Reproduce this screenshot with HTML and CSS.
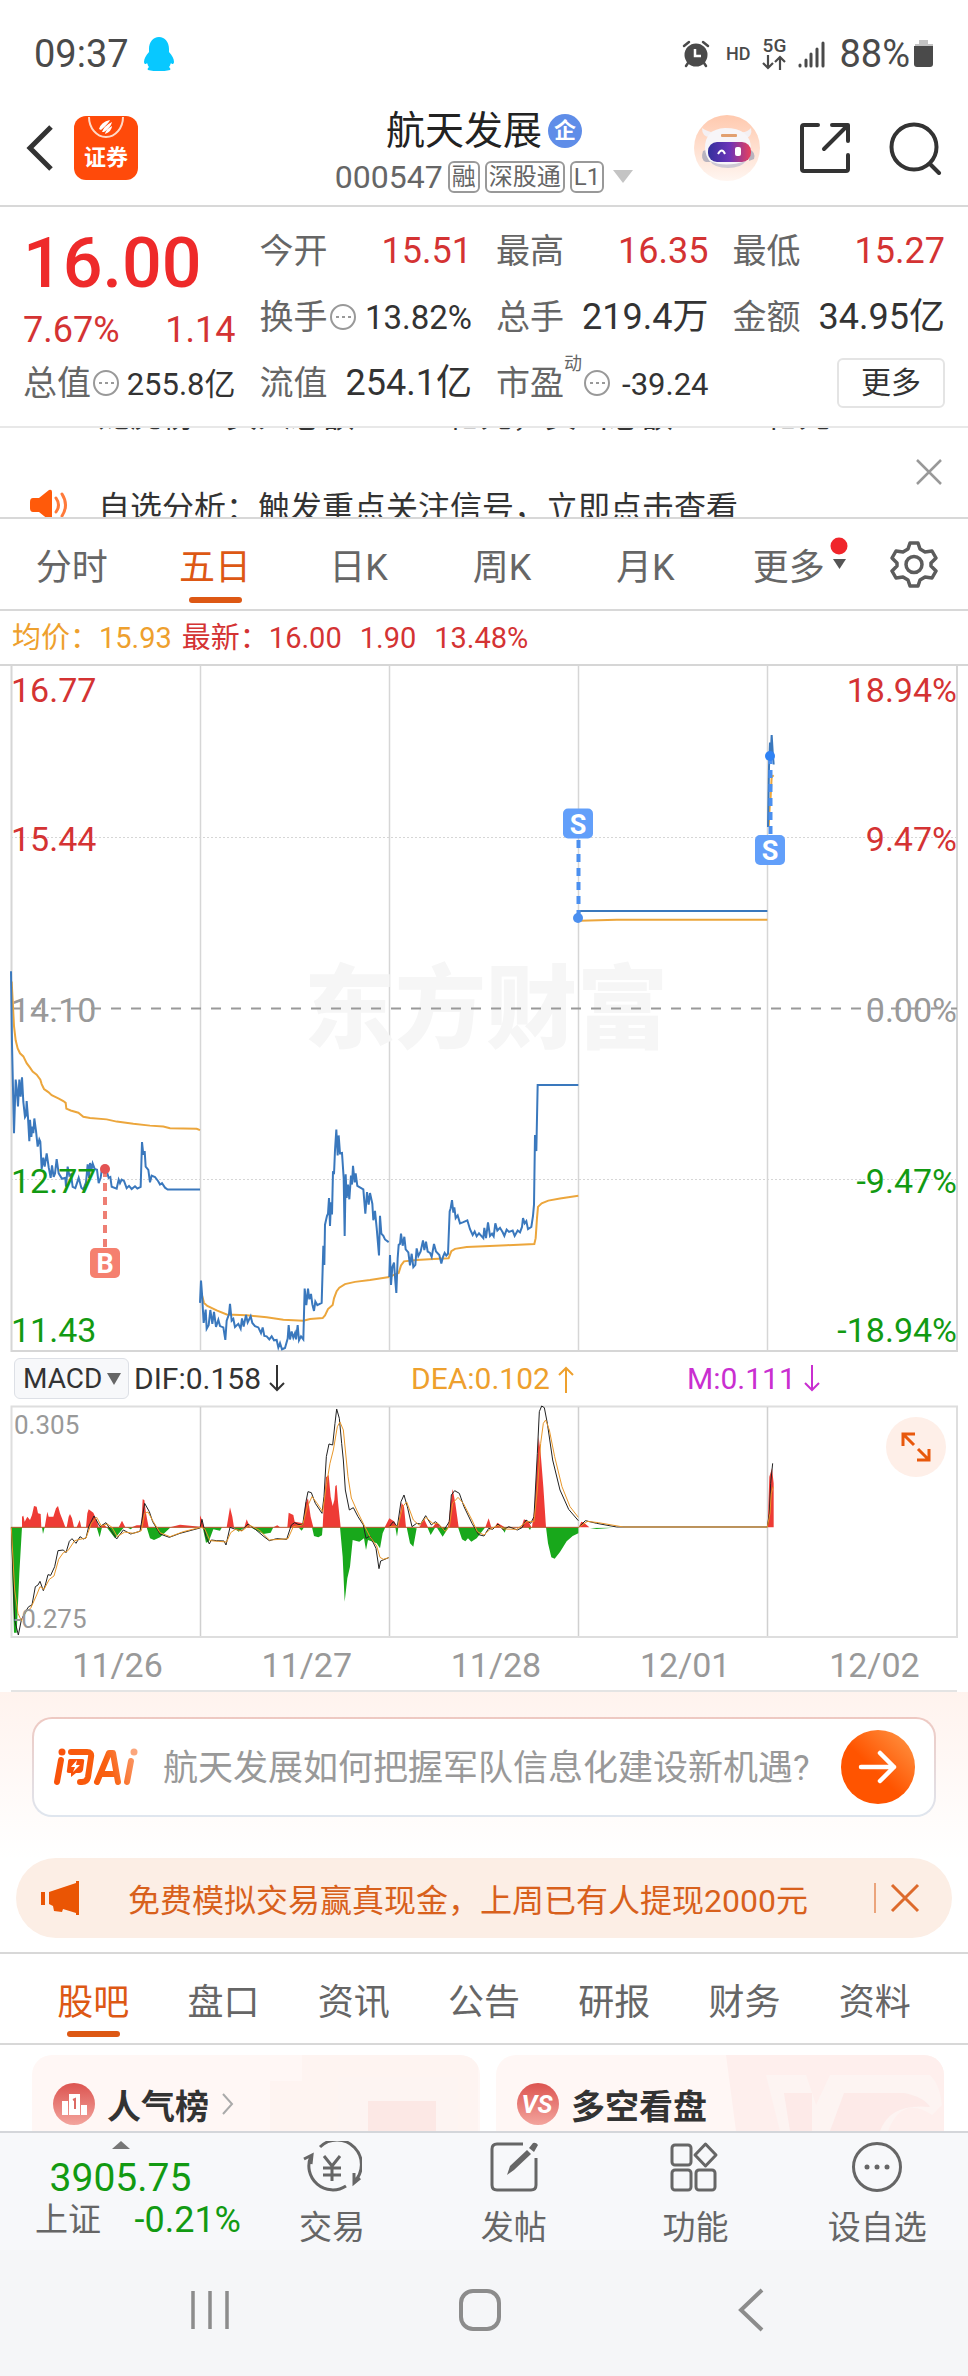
FILE: index.html
```html
<!DOCTYPE html>
<html lang="zh-CN">
<head>
<meta charset="utf-8">
<meta name="viewport" content="width=device-width, initial-scale=1">
<title>航天发展 000547</title>
<link rel="stylesheet" href="styles.css">
</head>
<body>
<div class="status-bar">
  <div class="status-left">
    <span>09:37</span>
    <svg width="32" height="36" viewBox="0 0 32 36"><path fill="#08c8ff" d="M16 1c6 0 10 5 10 12v3c3 3 5 7 5 10 0 2-2 3-3 1-1 2-1 3-2 4 1 1 2 2 1 3-3 1-8 1-11 1s-8 0-11-1c-1-1 0-2 1-3-1-1-1-2-2-4-1 2-3 1-3-1 0-3 2-7 5-10v-3C6 6 10 1 16 1z"/></svg>
  </div>
  <div class="status-right">
    <svg class="icon-alarm" width="28" height="28" viewBox="0 0 28 28"><circle cx="14" cy="15" r="11.500" fill="#4a4a4a"/><path d="M2 6l5-4M26 6l-5-4M6 23l-2 3M22 23l2 3" stroke="#4a4a4a" stroke-width="2.500" stroke-linecap="round"/><path d="M13 9v7h6" fill="none" stroke="#fff" stroke-width="2.500"/></svg>
    <span class="status-hd">HD</span>
    <span class="status-5g"><b>5G</b>
      <svg width="24" height="15" viewBox="0 0 24 15" fill="none" stroke="#4a4a4a" stroke-width="2.200"><path d="M6 0v13M1 8l5 5 5-5M18 15V2M13 7l5-5 5 5"/></svg>
    </span>
    <svg class="icon-signal" width="27" height="28" viewBox="0 0 27 28" stroke="#4a4a4a" stroke-width="3" stroke-linecap="round"><path d="M2 26v-1M8 26v-6M13 26V14M19 26V9M25 26V3"/></svg>
    <span class="status-pct">88%</span>
    <svg width="20" height="30" viewBox="0 0 20 30"><path fill="#c4c4c4" d="M5 1h9v4h5v3H1V5h4z"/><path fill="#4a4a4a" d="M0 7h19v18a3 3 0 0 1-3 3H3a3 3 0 0 1-3-3z"/></svg>
  </div>
</div>

<header class="header">
  <div class="header-left">
    <button class="bare" aria-label="返回"><svg width="28" height="48" viewBox="0 0 28 48"><path d="M25 3L4 24l21 21" fill="none" stroke="#333" stroke-width="5"/></svg></button>
    <a class="broker" href="#" aria-label="证券">
      <svg width="64" height="28" viewBox="0 0 64 28"><path d="M15 1a17 20 0 0 0 34 0" fill="none" stroke="#ffd9c8" stroke-width="2"/><path fill="#fff" d="M25 13q2-7 11-9-1 3-9 10zM28 16q2-6 10-10-1 5-8 10zM31 18q1-5 7-8 0 5-7 8z"/></svg>
      <span>证券</span>
    </a>
  </div>
  <div class="header-title">
    <h1>航天发展<span class="corp">企</span></h1>
    <p class="code">000547<span class="tag">融</span><span class="tag">深股通</span><span class="tag">L1</span>
      <svg width="20" height="14" viewBox="0 0 20 14"><path d="M0 0h20L10 13z" fill="#c4c4c4"/></svg></p>
  </div>
  <div class="header-right">
    <button class="bare" aria-label="智能助手">
      <svg width="68" height="68" viewBox="0 0 68 68">
        <defs>
          <linearGradient id="halo" x2="0" y2="1"><stop offset="0" stop-color="#ffc9ae"/><stop offset="1" stop-color="#fff6f1"/></linearGradient>
          <linearGradient id="visor"><stop offset="0" stop-color="#33309c"/><stop offset=".5" stop-color="#6b34b8"/><stop offset="1" stop-color="#e8405c"/></linearGradient>
        </defs>
        <circle cx="34" cy="34" r="33" fill="url(#halo)"/>
        <path fill="#f4f0f3" d="M9 14q0 9 8 9l6-5q-7 1-14-4zM58 14q2 8-6 11l-5-7q7 1 11-4z"/>
        <path fill="#b9b4bf" d="M10 37q-3 9 3 11h8V33zM56 35q7 3 5 10l-5 2z"/>
        <path fill="#f7f5f8" d="M12 34q0-19 20-20 26 0 26 21 0 18-24 18-21 0-22-19z"/>
        <path fill="#cfc9d4" d="M17 47q15 7 36 0-5 7-18 7-14 0-18-7z"/>
        <rect x="15" y="28" width="43" height="20" rx="9" fill="url(#visor)"/>
        <path d="M25 40q4-7 7 0" fill="none" stroke="#fff" stroke-width="2"/><rect x="42" y="33" width="6" height="9" rx="2" fill="#fff"/>
        <rect x="28" y="20" width="16" height="3" rx="1" fill="#e2a070"/>
      </svg>
    </button>
    <button class="bare" aria-label="分享"><svg width="52" height="52" viewBox="0 0 52 52" fill="none" stroke="#333" stroke-width="4" stroke-linecap="round" stroke-linejoin="round"><path d="M19 3H5a2 2 0 0 0-2 2v42a2 2 0 0 0 2 2h42a2 2 0 0 0 2-2V33M33 3h16v16M48 4L25 27"/></svg></button>
    <button class="bare" aria-label="搜索"><svg width="53" height="53" viewBox="0 0 53 53" fill="none" stroke="#333" stroke-width="4" stroke-linecap="round"><circle cx="25" cy="25" r="22.500"/><path d="M41 42l9 9"/></svg></button>
  </div>
</header>

<section class="quote">
  <div class="price">
    <strong>16.00</strong>
    <p><span>7.67%</span><span>1.14</span></p>
  </div>
  <div class="cell"><span class="label">今开</span><span class="up">15.51</span></div>
  <div class="cell"><span class="label">最高</span><span class="up">16.35</span></div>
  <div class="cell"><span class="label">最低</span><span class="up">15.27</span></div>
  <div class="cell"><span class="label">换手<svg class="info" viewBox="0 0 28 28"><circle cx="14" cy="14" r="12"/><path d="M7 14h3M13 14h3M19 14h3"/></svg></span><span class="mid">13.82%</span></div>
  <div class="cell"><span class="label">总手</span><span>219.4万</span></div>
  <div class="cell"><span class="label">金额</span><span>34.95亿</span></div>
  <div class="cell"><span class="label">总值<svg class="info" viewBox="0 0 28 28"><circle cx="14" cy="14" r="12"/><path d="M7 14h3M13 14h3M19 14h3"/></svg></span><span class="small">255.8亿</span></div>
  <div class="cell"><span class="label">流值</span><span>254.1亿</span></div>
  <div class="cell"><span class="label">市盈<sup>动</sup><svg class="info" viewBox="0 0 28 28"><circle cx="14" cy="14" r="12"/><path d="M7 14h3M13 14h3M19 14h3"/></svg></span><span class="small">-39.24</span></div>
  <div class="cell cell-end"><button class="more">更多</button></div>
</section>

<section class="ticker">
  <ul>
    <li><svg width="40" height="34" viewBox="0 0 40 34"><path fill="#ff5a0a" d="M4 10h6l13-9v31l-13-9H4q-3 0-3-4v-5q0-4 3-4z"/></svg><span>龙虎榜：买入总额：1.25亿元，卖出总额：1.02亿元</span></li>
    <li><svg width="40" height="34" viewBox="0 0 40 34"><path fill="#ff5a0a" d="M4 10h6l10-8q3-1 3 2v26q0 3-3 2l-10-8H4q-3 0-3-4v-6q0-4 3-4z"/><path d="M27 10q5 7 0 14M33 6q7 11 0 22" fill="none" stroke="#ff7a3a" stroke-width="3" stroke-linecap="round"/></svg><span>自选分析：触发重点关注信号，立即点击查看</span></li>
  </ul>
  <button class="bare ticker-close" aria-label="关闭"><svg width="26" height="26" viewBox="0 0 26 26"><path d="M1 1l24 24M25 1L1 25" stroke="#999" stroke-width="2.500"/></svg></button>
</section>

<nav class="periods">
  <button>分时</button>
  <button class="active">五日</button>
  <button>日K</button>
  <button>周K</button>
  <button>月K</button>
  <button><span class="with-badge">更多<svg class="badge" width="20" height="32" viewBox="0 0 20 32"><circle cx="10" cy="9" r="8.500" fill="#f0252b"/><path d="M4 22h13l-6.500 10z" fill="#555"/></svg></span></button>
  <button aria-label="设置"><svg width="48" height="48" viewBox="0 0 48 48" fill="none" stroke="#5c5c5c" stroke-width="3.500" stroke-linejoin="round"><path d="M20 3h8l2 6 5 3 7-1 4 7-5 5v3l5 5-4 7-7-1-5 3-2 6h-8l-2-6-5-3-7 1-4-7 5-5v-3l-5-5 4-7 7 1 5-3z"/><circle cx="24" cy="24.500" r="8"/></svg></button>
</nav>

<p class="summary"><span class="avg">均价：15.93</span><span>最新：16.00</span><span>1.90</span><span>13.48%</span></p>

<svg class="chart" viewBox="0 664 968 689">
  <g stroke="#d6d6d6" stroke-width="2" fill="none">
    <path d="M0 665H968"/>
    <path d="M11.500 665V1351H957V665"/>
    <path d="M200.500 666V1350M389.500 666V1350M578.500 666V1350M767.500 666V1350" stroke-width="1.500"/>
    <path d="M11 837.500H957M11 1179.500H957" stroke-width="1" stroke-dasharray="2 2"/>
  </g>
  <text class="watermark" x="304" y="1041">东方财富</text>
  <path d="M11 1008.500H957" stroke="#999" stroke-width="2" stroke-dasharray="10 10"/>
  <g class="axis">
    <text class="s-up" x="11" y="702">16.77</text>
    <text class="s-up" x="11" y="851">15.44</text>
    <text class="s-flat" x="11" y="1022">14.10</text>
    <text class="s-up" x="957" y="702" text-anchor="end">18.94%</text>
    <text class="s-up" x="957" y="851" text-anchor="end">9.47%</text>
    <text class="s-flat" x="957" y="1022" text-anchor="end">0.00%</text>
    <text class="s-down" x="957" y="1193" text-anchor="end">-9.47%</text>
    <text class="s-down" x="957" y="1342" text-anchor="end">-18.94%</text>
  </g>
  <g class="plot" transform="translate(0 660) scale(.333333 .446429)">
    <path class="avg-line" d="M35 720L42 820L47 852L53 870L60 881L70 888L80 903L90 913L98 922L110 929L121 940L125 950L132 961L145 968L155 975L175 982L190 988L197 992L199 1005L212 1009L235 1014L250 1023L270 1026L320 1029L350 1034L400 1039L450 1043L490 1045L510 1049L590 1050L600 1053"/>
    <path class="price-line" d="M33 697L36 860L42 1060L47 940L50 958L54 1000L58 940L62 978L66 935L70 990L75 1024L78 1020L80 988L84 1025L88 1078L90 1030L94 1068L97 1045L100 1060L103 1027L108 1055L113 1090L118 1074L121 1079L125 1140L130 1115L134 1135L140 1105L146 1136L152 1160L156 1132L161 1158L165 1150L170 1118L176 1150L186 1162L196 1160L198 1180L203 1135L208 1155L213 1152L218 1180L226 1183L236 1160L244 1182L250 1186L258 1170L263 1130L267 1160L270 1127L275 1140L278 1128L284 1140L291 1142L296 1172L302 1160L306 1138L312 1150L320 1145L326 1160L331 1158L335 1180L350 1184L356 1164L360 1172L365 1164L372 1167L380 1183L387 1178L395 1185L405 1179L412 1184L422 1180L426 1080L430 1108L434 1100L437 1135L445 1142L450 1170L455 1155L465 1158L475 1168L480 1175L486 1172L495 1182L503 1186H600"/>
    <path class="avg-line" d="M605 1420L612 1440L622 1447L650 1457L680 1466L740 1468L800 1472L850 1478L910 1480L930 1476L968 1474L975 1468L984 1454L998 1445L1002 1430L1010 1414L1018 1406L1035 1398L1065 1393L1110 1389L1168 1382"/>
    <path class="price-line" d="M600 1440L603 1390L606 1420L611 1485L617 1455L620 1498L626 1490L631 1456L637 1487L642 1460L648 1494L655 1478L660 1492L670 1495L676 1523L680 1480L687 1465L690 1442L695 1480L700 1476L705 1494L715 1487L722 1498L726 1475L731 1493L738 1467L743 1484L752 1470L757 1485L765 1492L775 1495L783 1508L788 1495L793 1514L800 1515L808 1522L815 1515L822 1524L830 1523L835 1540L840 1530L846 1544L855 1541L863 1520L866 1490L870 1522L875 1504L880 1518L885 1508L888 1522L893 1490L897 1524L903 1515L910 1522L914 1408L919 1445L924 1408L928 1432L933 1420L937 1443L942 1458L946 1437L952 1445L965 1440L970 1312L973 1355L975 1265L981 1245L984 1240L987 1205L990 1268L993 1215L996 1242L999 1145L1002 1152L1005 1098L1009 1052L1013 1110L1016 1065L1020 1105L1026 1104L1031 1160L1034 1290L1037 1152L1040 1205L1044 1175L1048 1208L1053 1155L1056 1175L1059 1133L1064 1170L1067 1150L1072 1178L1090 1186L1096 1240L1101 1192L1106 1220L1110 1194L1117 1218L1120 1255L1125 1234L1130 1272L1137 1334L1140 1245L1144 1285L1150 1290L1155 1298L1166 1304"/>
    <path class="avg-line" d="M1170 1382L1180 1378L1196 1373L1203 1356L1212 1347L1250 1344L1300 1342L1346 1340L1354 1324L1365 1319L1400 1315L1452 1313L1520 1311L1603 1308L1607 1295L1611 1250L1614 1225L1625 1217L1645 1211L1680 1206L1735 1200"/>
    <path class="price-line" d="M1168 1382L1170 1333L1173 1400L1177 1360L1182 1350L1186 1392L1189 1418L1193 1340L1196 1310L1200 1308L1203 1285L1208 1312L1213 1292L1217 1320L1225 1327L1230 1356L1235 1330L1240 1360L1246 1355L1250 1318L1255 1335L1262 1325L1269 1300L1273 1322L1278 1303L1283 1325L1290 1328L1295 1337L1302 1308L1308 1325L1318 1333L1324 1352L1329 1337L1334 1328L1339 1334L1344 1330L1349 1235L1352 1228L1356 1210L1360 1238L1363 1226L1367 1250L1373 1244L1380 1262L1390 1259L1402 1255L1410 1275L1418 1288L1424 1280L1430 1291L1437 1284L1450 1295L1453 1272L1458 1295L1464 1260L1470 1290L1476 1285L1481 1291L1486 1262L1492 1278L1500 1272L1508 1282L1513 1290L1520 1276L1527 1281L1538 1278L1544 1290L1553 1278L1560 1282L1566 1270L1569 1250L1574 1262L1579 1257L1584 1275L1594 1270L1599 1245L1602 1220L1605 1064L1609 1100L1613 952H1735"/>
    <path class="avg-line" d="M1740 584L1850 582H2302M2306 374L2309 330L2312 306L2315 262L2321 258"/>
    <path class="price-line" d="M1735 578L1739 562H2302M2304 374L2307 240L2310 185L2312 215L2315 168L2318 205L2321 234"/>
  </g>
  <g class="axis"><text class="s-down" x="11" y="1193">12.77</text><text class="s-down" x="11" y="1342">11.43</text></g>
  <g stroke-width="4" stroke-dasharray="8 6">
    <path d="M578.500 840V918M770.500 756V835" stroke="#4b8fef"/><path d="M105 1169V1248" stroke="#ee7f74"/>
  </g>
  <circle cx="578" cy="918" r="5" fill="#4b8fef"/><circle cx="770" cy="756" r="5" fill="#2f82f4"/><circle cx="105" cy="1169" r="5" fill="#e35353"/>
  <rect x="563" y="808.500" width="30" height="30" rx="5" fill="#629ffa"/><rect x="755" y="835" width="30" height="30" rx="5" fill="#629ffa"/><rect x="90" y="1248" width="30" height="30" rx="5" fill="#f5806f"/>
  <g class="marker"><text x="578" y="834">S</text><text x="770" y="860">S</text><text x="105" y="1273">B</text></g>
</svg>

<div class="legend">
  <span class="picker"><select aria-label="指标"><option>MACD</option></select><svg width="14" height="12" viewBox="0 0 14 12"><path d="M0 0h14L7 12z" fill="#666"/></svg></span>
  <span class="dif">DIF:0.158<svg width="16" height="28" viewBox="0 0 16 28"><path d="M8 0v25M1 18l7 7 7-7"/></svg></span>
  <span class="dea">DEA:0.102<svg width="16" height="28" viewBox="0 0 16 28"><path d="M8 28V3M1 10l7-7 7 7"/></svg></span>
  <span class="m">M:0.111<svg width="16" height="28" viewBox="0 0 16 28"><path d="M8 0v25M1 18l7 7 7-7"/></svg></span>
</div>

<div class="macd-wrap">
<svg class="chart" viewBox="0 1404 968 236">
  <g stroke="#dedede" stroke-width="2" fill="none"><path d="M11.500 1637V1406.500H957V1637z"/><path d="M200.500 1407V1636M389.500 1407V1636M578.500 1407V1636M767.500 1407V1636" stroke="#d0d0d0" stroke-width="1.500"/></g>
  <g transform="translate(0 1340) scale(.333333)">
    <path fill="#ee3b35" d="M66 562V530L70 527L74 545L82 530L90 540L96 525L102 498L110 500L114 520L122 522L124 562zM134 562L142 515L146 530L160 530L168 505L174 498L180 520L190 545L196 562zM200 562L206 530L210 522L216 535L222 562zM230 562L239 540L244 562zM258 562L262 520L266 508L280 518L290 540L296 562zM300 562L310 552L320 562zM356 562L366 542L376 562zM395 562L410 556H424L428 478L433 480L438 520L446 562zM510 562L540 554L600 560V526L606 540L612 562zM680 562L690 502L697 530L702 562zM733 562L740 538L750 562zM820 562L832 556L840 562zM862 562L866 518L880 525L884 545L910 550L916 490L924 475L932 530L940 562zM968 562L972 480L978 412L986 405L992 470L998 498L1003 480L1006 438L1010 435L1014 485L1022 562zM1154 562L1168 535L1184 545L1190 562zM1194 562L1200 520L1205 488L1212 500L1218 562zM1258 562L1272 536L1284 562zM1298 562L1310 545L1320 562zM1344 562L1352 490L1358 447L1366 490L1376 562zM1456 562L1466 535L1474 562zM1484 562L1492 548L1514 562zM1564 562L1572 538L1586 545L1594 562H1596L1604 500L1610 380L1616 290L1622 340L1630 440L1638 562zM1736 562L1744 545L1752 548L1768 562zM2303 562L2308 410L2316 385L2321 430V562z"/>
    <path fill="#18a81b" d="M33 562L42 878H50L58 700L66 562zM126 562L129 582L134 562zM290 562L299 592L306 562zM320 562L345 595L372 562zM380 562L392 568L400 562zM440 562L450 595L462 600L480 592L512 562zM608 562L618 608L626 605L640 568L660 572L666 562zM700 562L716 575L734 562zM752 562L790 582L812 578L820 562zM895 562L905 572L912 562zM936 562L942 588L955 592L966 586L968 562zM1020 562L1028 650L1034 785L1042 715L1050 680L1058 600L1078 605L1092 595L1098 630L1104 600L1130 610L1140 625L1148 580L1156 562zM1186 562L1191 590L1195 562zM1220 562L1230 610L1240 620L1250 565zM1282 562L1292 585L1306 562zM1310 562L1328 590L1346 562zM1374 562L1386 598L1396 604L1404 595L1414 605L1430 595L1456 562zM1504 562L1514 578L1520 562zM1584 562L1590 570L1594 562zM1638 562L1644 610L1654 652L1664 656L1680 636L1700 604L1718 588L1735 580V562zM1770 564L1790 567L1840 563z"/>
    <path d="M33 562H1735" stroke="#b5542a" stroke-width="3"/>
    <g class="plot thin">
      <path class="dif-line" d="M34 562L44 840L55 885L64 840L76 815L86 800L96 795L106 740L114 735L120 724L130 752L136 735L144 704L152 706L164 680L174 632L190 630L198 638L208 604L216 596L228 610L240 590L250 597L258 594L266 560L282 528L300 560L318 548L332 570L350 597L370 570L392 582L420 574L434 490L448 515L458 545L480 582L508 592L540 580L600 564L606 538L618 590L628 612L634 600L650 602L672 603L678 615L690 562L706 568L726 572L744 552L766 568L792 590L808 602L830 596L860 598L874 555L884 548L894 553L908 555L918 485L924 455L934 458L946 490L966 520L972 470L979 350L987 312L998 315L1005 250L1010 207L1018 235L1025 310L1030 360L1036 450L1048 510L1060 503L1074 530L1090 555L1098 595L1110 588L1128 625L1137 686L1142 663L1166 653M1168 560L1180 545L1192 560L1203 485L1212 465L1222 500L1236 560L1250 550L1262 552L1277 527L1294 555L1306 545L1332 570L1348 545L1354 465L1364 452L1378 460L1392 500L1416 550L1436 584L1452 588L1466 565L1478 568L1494 552L1510 570L1526 560L1552 570L1566 563L1578 540L1592 550L1602 530L1612 340L1618 215L1625 198L1633 203L1642 250L1658 360L1680 450L1706 508L1735 542M1736 562L1756 542L1790 550L1850 561H2302L2308 520L2312 430L2318 370"/>
      <path class="dea-line" d="M34 562L44 750L54 820L64 842L80 812L92 805L110 765L120 740L132 748L148 718L162 708L176 658L190 638L204 632L224 602L240 598L258 594L274 550L290 532L304 558L322 552L336 562L352 590L374 576L400 580L424 572L434 520L444 516L460 545L480 578L510 590L550 575L602 562L614 566L630 602L655 604L680 606L692 578L706 568L726 573L748 555L780 572L808 600L840 598L864 596L880 560L908 555L922 500L936 470L950 488L968 515L980 430L990 370L1000 330L1012 260L1020 246L1030 270L1044 410L1054 474L1070 510L1092 555L1110 590L1130 618L1140 652L1150 658L1166 653M1168 560L1194 558L1208 500L1220 486L1240 540L1258 556L1278 532L1298 550L1314 550L1336 574L1348 560L1358 490L1374 472L1390 490L1416 540L1432 575L1452 585L1470 568L1494 556L1512 567L1550 568L1580 545L1602 545L1612 450L1622 310L1630 250L1637 240L1648 270L1664 350L1686 440L1710 500L1735 532M1736 562L1762 544L1795 548L1870 561H2302L2310 520L2314 460L2320 440"/>
    </g>
  </g>
  <g class="axis-small"><text x="14" y="1434">0.305</text><text x="14" y="1628">-0.275</text></g>
</svg>
<button class="expand" aria-label="全屏"><svg width="30" height="30" viewBox="0 0 30 30" fill="none" stroke="#e8580c" stroke-width="3"><path d="M2 14V2h12M2 2l11 11M28 17v11H16M28 28L17 17"/></svg></button>
</div>

<div class="dates"><span>11/26</span><span>11/27</span><span>11/28</span><span>12/01</span><span>12/02</span></div>

<section class="ask">
  <form class="ask-box">
    <svg width="86" height="40" viewBox="0 0 86 40" aria-label="问Ai">
      <defs><linearGradient id="ask-fill" gradientUnits="userSpaceOnUse" x1="0" y1="30" x2="86" y2="0"><stop offset="0" stop-color="#f9520a"/><stop offset=".6" stop-color="#f9600f"/><stop offset="1" stop-color="#fba67c"/></linearGradient></defs>
      <g fill="none" stroke="url(#ask-fill)" stroke-width="6" stroke-linecap="round" stroke-linejoin="round"><path d="M8 13L4 35M18 5h16q5 0 4 5l-3 20q-1 5-6 5h-2M44 35L56 6h4l5 29M48 27h14M78 14l-4 21"/></g>
      <circle cx="9" cy="5" r="3.500" fill="#f9520a"/><circle cx="81" cy="5" r="3.500" fill="#fba67c"/>
      <path d="M17 12h12q3 0 2 3l-1 8q-1 3-4 3h-3l-5 4v-4h-2q-3 0-2-3l1-8q0-3 2-3z" fill="#f9520a"/><path d="M24 13l-6 7h4l-2 5 7-7h-4z" fill="#fff"/>
    </svg>
    <input type="text" aria-label="提问" placeholder="航天发展如何把握军队信息化建设新机遇?">
    <button type="button" class="go" aria-label="发送"><svg width="40" height="36" viewBox="0 0 40 36" fill="none" stroke="#fff" stroke-width="4.500" stroke-linecap="round" stroke-linejoin="round"><path d="M3 18h33M22 4l14 14-14 14"/></svg></button>
  </form>
</section>

<section class="promo">
  <svg width="42" height="36" viewBox="0 0 42 36"><path fill="#ea5504" d="M1 12h4v13H1zM9 12L36 3V1h3v34h-3v-2l-13-4-1 3-8-1-1-5-4-2z"/></svg>
  <a href="#">免费模拟交易赢真现金，上周已有人提现2000元</a>
  <button class="bare" aria-label="关闭"><svg width="30" height="30" viewBox="0 0 30 30"><path d="M2 2l26 26M28 2L2 28" stroke="#dd6a2c" stroke-width="3"/></svg></button>
</section>

<nav class="sections">
  <button class="active">股吧</button><button>盘口</button><button>资讯</button><button>公告</button><button>研报</button><button>财务</button><button>资料</button>
</nav>

<section class="cards">
  <a class="card" href="#">
    <svg class="card-art" width="210" height="76" viewBox="0 0 210 76"><path fill="#fdf1ef" d="M0 26h32V0h176v76H0z" opacity=".6"/><path fill="#fdf4f2" d="M68 22h120v54H68z"/><path fill="#fce8e5" d="M98 46h68v30H98z"/></svg>
    <svg width="42" height="42" viewBox="0 0 42 42"><defs><linearGradient id="dot" x2="0" y2="1"><stop offset="0" stop-color="#dc5450"/><stop offset="1" stop-color="#f3a49d"/></linearGradient></defs><circle cx="21" cy="21" r="21" fill="url(#dot)"/><path fill="#fff" d="M9 18h6v14H9zM16 11h11v21H16zM28 22h6v10h-6z"/><path d="M20 17l2-1v10" fill="none" stroke="#dc6a64" stroke-width="2"/></svg>
    <strong>人气榜</strong>
    <svg width="14" height="22" viewBox="0 0 14 22"><path d="M2 1l9 10-9 10" fill="none" stroke="#aaa" stroke-width="2"/></svg>
  </a>
  <a class="card" href="#">
    <svg class="card-art" width="218" height="76" viewBox="0 0 218 76"><path fill="#feefed" d="M0 0h218v76H10z"/><path fill="#fdf4f2" d="M40 20h40l10 30 14-30h100q10 10 12 30l-10 10q-30-20-44 16H54z"/><path fill="#fce6e4" d="M58 38h28v38H64zM118 38h60q20 4 26 14-40-4-50 24h-50z" opacity=".7"/></svg>
    <svg width="42" height="42" viewBox="0 0 42 42"><circle cx="21" cy="21" r="21" fill="url(#dot)"/><text class="vs" x="20" y="30" text-anchor="middle">VS</text></svg>
    <strong>多空看盘</strong>
  </a>
</section>

<nav class="toolbar">
  <a class="index" href="#">
    <svg width="18" height="8" viewBox="0 0 18 8"><path d="M0 8L9 0l9 8z" fill="#777"/></svg>
    <b>3905.75</b>
    <span class="index-row"><span>上证</span><em>-0.21%</em></span>
  </a>
  <a href="#"><svg width="60" height="52" viewBox="0 0 60 52" fill="none" stroke="#666" stroke-width="3"><path d="M18 6a24 24 0 0 1 34 35M44 45A24 24 0 0 1 9 15M2 18l8-4-1 9M52 32v10l6-5M22 15l8 10 8-10M30 25v15M21 27h18M21 34h18"/></svg><span>交易</span></a>
  <a href="#"><svg width="60" height="52" viewBox="0 0 60 52" fill="none" stroke="#666" stroke-width="3"><path d="M39 3H13q-5 0-5 5v36q0 5 5 5h34q5 0 5-5V17"/><path fill="#666" stroke="none" d="M23 34l3-9L43 9l4 4-17 16zM45 7l4-5q3-1 5 2l-4 7z"/></svg><span>发帖</span></a>
  <a href="#"><svg width="60" height="52" viewBox="0 0 60 52" fill="none" stroke="#666" stroke-width="3"><rect x="7" y="4" width="19" height="20" rx="3"/><rect x="7" y="29" width="19" height="20" rx="3"/><rect x="31" y="29" width="19" height="20" rx="3"/><path d="M40.500 3L51 14 40.500 25 30 14z" stroke-linejoin="round"/></svg><span>功能</span></a>
  <a href="#"><svg width="60" height="52" viewBox="0 0 60 52"><circle cx="30" cy="26" r="23.500" fill="none" stroke="#666" stroke-width="3"/><g fill="#666"><circle cx="20" cy="26" r="2.500"/><circle cx="30" cy="26" r="2.500"/><circle cx="40" cy="26" r="2.500"/></g></svg><span>设自选</span></a>
</nav>

<nav class="system-nav">
  <button class="bare" aria-label="最近任务"><svg width="38" height="42" viewBox="0 0 38 42"><path d="M2 2v38M19 2v38M36 2v38" stroke="#8c8c8c" stroke-width="3.500"/></svg></button>
  <button class="bare" aria-label="主屏幕"><svg width="44" height="44" viewBox="0 0 44 44"><rect x="3" y="3" width="38" height="38" rx="12" fill="none" stroke="#8c8c8c" stroke-width="4"/></svg></button>
  <button class="bare nav-back" aria-label="返回上一级"><svg width="26" height="44" viewBox="0 0 26 44"><path d="M24 2L3 22l21 20" fill="none" stroke="#8c8c8c" stroke-width="4"/></svg></button>
</nav>
</body>
</html>
```

FILE: styles.css
```css
* { box-sizing: border-box; margin: 0; padding: 0; }
body {
  background: #fff;
  color: #333;
  font-family: Roboto, "Noto Sans CJK SC", sans-serif;
  font-size: 36px;
}
button, input, select { font: inherit; color: inherit; border: 0; background: none; outline: 0; }
a { color: inherit; text-decoration: none; }
ul { list-style: none; }
svg { display: block; flex: none; }
.bare { display: block; }

.status-bar {
  display: flex;
  justify-content: space-between;
  align-items: center;
  padding: 32px 34px 12px;
  font-size: 38px;
  line-height: 44px;
  color: #4a4a4a;
}
.status-left, .status-right { display: flex; align-items: center; }
.status-left { gap: 14px; }
.status-hd { margin: 0 12px 0 16px; font-size: 18px; font-weight: 500; line-height: 24px; }
.status-5g { display: flex; flex-direction: column; align-items: center; gap: 1px; font-size: 19px; line-height: 16px; }
.status-5g b { font-weight: 500; }
.icon-signal { margin: 0 14px 0 12px; }
.status-pct { margin-right: 4px; }

.header {
  display: grid;
  grid-template-columns: 1fr auto 1fr;
  align-items: center;
  padding: 9px 26px 6px;
  border-bottom: 2px solid #d8d8d8;
}
.header-left { display: flex; align-items: center; gap: 20px; }
.broker {
  width: 64px;
  height: 64px;
  border-radius: 12px;
  background: #ff4a0a;
  color: #fff;
  font-size: 22px;
  font-weight: 700;
  line-height: 28px;
  text-align: center;
}
.broker span { display: block; }
.header-title { padding-top: 10px; }
.header-title h1 {
  display: flex;
  justify-content: center;
  align-items: center;
  gap: 6px;
  font-size: 39px;
  font-weight: 400;
  line-height: 48px;
  color: #222;
}
.corp {
  width: 34px;
  height: 34px;
  border-radius: 50%;
  background: #5f8de8;
  color: #fff;
  font-size: 22px;
  font-weight: 700;
  line-height: 33px;
  text-align: center;
}
.code { display: flex; justify-content: center; align-items: center; gap: 5px; font-size: 32px; line-height: 44px; color: #666; }
.code svg { margin-left: 4px; }
.tag { padding: 0 2px; border: 2px solid #999; border-radius: 6px; font-size: 24px; line-height: 28px; }
.header-right { display: flex; justify-content: flex-end; align-items: center; gap: 38px; }

.quote {
  display: grid;
  grid-template-columns: repeat(4, 1fr);
  grid-auto-rows: 66px;
  column-gap: 24px;
  padding: 11px 23px 10px;
  border-bottom: 2px solid #e8e8e8;
}
.price { grid-row: span 2; color: #d43333; }
.price strong { display: block; font-size: 70px; font-weight: 500; line-height: 90px; color: #ee2a2a; }
.price p { display: flex; justify-content: space-between; line-height: 44px; }
.cell { display: flex; justify-content: space-between; align-items: baseline; line-height: 66px; white-space: nowrap; }
.cell-end { justify-content: flex-end; align-items: center; }
.label { display: flex; align-items: center; font-size: 34px; color: #666; }
.label sup { align-self: flex-start; margin-top: 4px; font-size: 18px; line-height: 20px; }
.info { width: 28px; height: 28px; margin-left: 1px; fill: none; stroke: #999; stroke-width: 2; }
.up { color: #d43333; }
.mid { font-size: 33px; }
.small { font-size: 31px; }
.more { width: 108px; border: 2px solid #e4e4e4; border-radius: 6px; font-size: 30px; line-height: 46px; }

.ticker { position: relative; height: 91px; overflow: hidden; border-bottom: 2px solid #d8d8d8; }
.ticker ul { margin-top: -61px; }
.ticker li { display: flex; align-items: center; gap: 29px; height: 92px; padding-left: 29px; font-size: 32px; white-space: nowrap; }
.ticker-close { position: absolute; top: 31px; right: 26px; }

.periods { display: grid; grid-template-columns: repeat(6, 4fr) 3fr; border-bottom: 2px solid #d8d8d8; color: #666; }
.periods button, .sections button { position: relative; display: flex; justify-content: center; align-items: center; height: 90px; }
.with-badge { position: relative; }
.badge { position: absolute; top: -1px; left: 100%; margin-left: 4px; }
button.active { color: #dd5814; }
.active::after { content: ""; position: absolute; bottom: 6px; width: 53px; height: 6px; border-radius: 3px; background: #dd5814; }

.summary { display: flex; gap: 18px; padding: 5px 12px 4px; font-size: 29px; line-height: 44px; color: #d43333; white-space: nowrap; }
.avg { margin-right: -8px; color: #eea02d; }

.chart { width: 100%; height: auto; }
.watermark { font-size: 91px; font-weight: 900; fill: #f6f6f6; }
.axis { font-size: 34px; }
.axis-small { font-size: 26px; fill: #999; }
.s-up { fill: #d43333; }
.s-down { fill: #129a12; }
.s-flat { fill: #999; }
.plot path { fill: none; stroke-width: 2px; vector-effect: non-scaling-stroke; }
.thin path { stroke-width: 1px; }
.avg-line { stroke: #eca63c; }
.price-line { stroke: #3a78bd; }
.dif-line { stroke: #222; }
.dea-line { stroke: #e8972a; }
.marker { font-size: 27px; font-weight: 700; fill: #fff; text-anchor: middle; }

.legend { display: grid; grid-template-columns: 120px 277px 276px 1fr; align-items: center; height: 51px; padding-left: 14px; font-size: 30px; white-space: nowrap; }
.legend > span { display: flex; align-items: center; gap: 8px; }
.legend path { stroke-width: 2; }
.picker { position: relative; width: 115px; }
.picker select { width: 100%; height: 41px; padding-left: 8px; border: 1px solid #dde0e6; border-radius: 6px; background: #f7f8fa; appearance: none; font-size: 28px; }
.picker svg { position: absolute; right: 8px; pointer-events: none; }
.dif path, .dea path, .m path { fill: none; stroke: currentColor; }
.dea { color: #eea02d; }
.m { color: #c92fd0; }
.macd-wrap { position: relative; }
.expand { position: absolute; top: 13px; right: 22px; display: grid; place-items: center; width: 60px; height: 60px; border-radius: 50%; background: #feefe8; }

.dates { display: grid; grid-template-columns: repeat(5, 1fr); margin: 0 11px; padding: 2px 0; border-bottom: 2px solid #e4e4e4; font-size: 34px; line-height: 46px; text-align: center; color: #999; }
.dates span { padding-left: 24px; }

.ask { padding: 25px 32px 41px; background: linear-gradient(#fff3ee, #fff); }
.ask-box {
  display: flex;
  align-items: center;
  height: 100px;
  padding: 0 19px;
  border: 2px solid transparent;
  border-radius: 20px;
  background: linear-gradient(#fff, #fff) padding-box, linear-gradient(#eec9c2, #dfe6ef) border-box;
}
.ask-box input { flex: 1; min-width: 0; margin-left: 24px; padding-top: 4px; font-size: 35px; line-height: 48px; }
.ask-box input::placeholder { color: #999; opacity: 1; }
.go { display: grid; place-items: center; width: 74px; height: 74px; border-radius: 50%; background: linear-gradient(45deg, #ff5400 45%, #ff9a4a); }

.promo { display: flex; align-items: center; margin: 0 16px 14px; padding: 0 32px 0 24px; height: 80px; border-radius: 40px; background: #fceee5; font-size: 32px; color: #d8601c; white-space: nowrap; }
.promo a { flex: 1; margin-left: 46px; }
.promo button { padding-left: 14px; border-left: 2px solid #eba47c; }

.sections { display: grid; grid-template-columns: repeat(7, 1fr); padding: 0 28px; border-top: 2px solid #d8d8d8; border-bottom: 2px solid #d8d8d8; color: #666; }
.sections button { height: 89px; }

.cards { display: grid; grid-template-columns: 1fr 1fr; gap: 16px; padding: 10px 24px 0 32px; border-bottom: 2px solid #d4d6da; }
.card { position: relative; display: flex; align-items: center; gap: 12px; height: 76px; padding: 22px 21px 0; border-radius: 20px 20px 0 0; overflow: hidden; background: #fff7f5; font-size: 34px; }
.card > * { position: relative; }
.card .card-art { position: absolute; right: 0; top: 0; }
.vs { font-size: 25px; font-weight: 700; font-style: italic; fill: #fff; }

.toolbar { display: grid; grid-template-columns: 241px repeat(4, 1fr); height: 117px; background: #f7f8fa; font-size: 33px; color: #666; }
.toolbar a { display: flex; flex-direction: column; align-items: center; padding-top: 8px; }
.toolbar a > span { line-height: 44px; margin-top: 13px; }
.toolbar b { font-size: 39px; font-weight: 400; line-height: 44px; margin-top: 7px; color: #129a12; }
.toolbar .index { padding-left: 35px; }
.toolbar .index-row { display: flex; justify-content: space-between; width: 100%; margin-top: 0; line-height: 40px; }
.index > svg, .index > b { margin-right: 35px; }
.index em { font-size: 36px; font-style: normal; color: #129a12; }

.system-nav { display: flex; justify-content: space-between; align-items: center; padding: 38px 204px 44px 191px; background: #f5f6f8; }
.nav-back { padding-left: 8px; }
```
